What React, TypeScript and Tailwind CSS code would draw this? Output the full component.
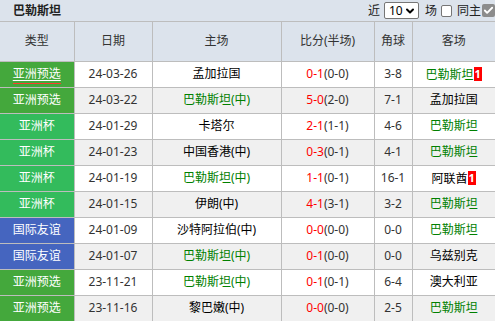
import { ChevronDown, Check } from 'lucide-react';

type Row = {
  type: string;
  date: string;
  home: string;
  homeGreen?: boolean;
  score: string;
  half: string;
  corner: string;
  away: string;
  awayGreen?: boolean;
  card?: string;
};

const rows: Row[] = [
  { type: '亚洲预选', date: '24-03-26', home: '孟加拉国', score: '0-1', half: '(0-0)', corner: '3-8', away: '巴勒斯坦', awayGreen: true, card: '1' },
  { type: '亚洲预选', date: '24-03-22', home: '巴勒斯坦(中)', homeGreen: true, score: '5-0', half: '(2-0)', corner: '7-1', away: '孟加拉国' },
  { type: '亚洲杯', date: '24-01-29', home: '卡塔尔', score: '2-1', half: '(1-1)', corner: '4-6', away: '巴勒斯坦', awayGreen: true },
  { type: '亚洲杯', date: '24-01-23', home: '中国香港(中)', score: '0-3', half: '(0-1)', corner: '4-1', away: '巴勒斯坦', awayGreen: true },
  { type: '亚洲杯', date: '24-01-19', home: '巴勒斯坦(中)', homeGreen: true, score: '1-1', half: '(0-1)', corner: '16-1', away: '阿联酋', card: '1' },
  { type: '亚洲杯', date: '24-01-15', home: '伊朗(中)', score: '4-1', half: '(3-1)', corner: '3-2', away: '巴勒斯坦', awayGreen: true },
  { type: '国际友谊', date: '24-01-09', home: '沙特阿拉伯(中)', score: '0-0', half: '(0-0)', corner: '0-0', away: '巴勒斯坦', awayGreen: true },
  { type: '国际友谊', date: '24-01-07', home: '巴勒斯坦(中)', homeGreen: true, score: '0-1', half: '(0-0)', corner: '0-0', away: '乌兹别克' },
  { type: '亚洲预选', date: '23-11-21', home: '巴勒斯坦(中)', homeGreen: true, score: '0-1', half: '(0-1)', corner: '6-4', away: '澳大利亚' },
  { type: '亚洲预选', date: '23-11-16', home: '黎巴嫩(中)', score: '0-0', half: '(0-0)', corner: '2-5', away: '巴勒斯坦', awayGreen: true },
];

function typeColor(t: string) {
  if (t === '亚洲杯') return 'bg-[#33bb5c]';
  if (t === '国际友谊') return 'bg-[#4565bf]';
  return 'bg-[#44a83c]';
}

function App() {
  return (
    <div className="w-[495px] h-[321px] overflow-hidden bg-white text-[12px] leading-none text-[#222] font-['Noto_Sans','Noto_Sans_CJK_SC',sans-serif]">
      <div className="h-[22px] bg-[#dce3ec] border-b border-[#bdbdbd] flex items-center justify-between">
        <span className="pl-[13px] font-bold text-[12px] text-[#222]">巴勒斯坦</span>
        <div className="flex items-center h-full whitespace-nowrap w-[127px] shrink-0">
          <span className="text-[12px] w-[16px]">近</span>
          <div className="w-[35px] h-[17px] bg-white border border-[#767676] rounded-[2px] flex items-center justify-between pl-[4px] pr-[2px] text-[12px] text-black">
            <span>10</span>
            <ChevronDown size={12} strokeWidth={4} className="text-black" />
          </div>
          <span className="text-[12px] ml-[6px] mr-[4px]">场</span>
          <div className="w-[11px] h-[12px] bg-white border border-[#767676] rounded-[2px] shrink-0" />
          <span className="text-[12px] ml-[5px] mr-[1px]">同主</span>
          <div className="w-[13px] h-[13px] bg-[#8c8c8c] rounded-[2px] flex items-center justify-center shrink-0">
            <Check size={11} strokeWidth={4} className="text-white" />
          </div>
        </div>
      </div>
      <table className="w-[495px] table-fixed border-collapse">
        <colgroup>
          <col className="w-[74px]" />
          <col className="w-[78px]" />
          <col className="w-[129px]" />
          <col className="w-[93px]" />
          <col className="w-[38px]" />
          <col className="w-[83px]" />
        </colgroup>
        <thead>
          <tr className="h-[39px] bg-[#dce3ec] text-[12px] text-[#333]">
            {['类型', '日期', '主场', '比分(半场)', '角球', '客场'].map((h, i) => (
              <th
                key={h}
                className={`font-normal border-b border-[#bdbdbd] ${i > 0 ? 'border-l' : ''}`}
              >
                {h}
              </th>
            ))}
          </tr>
        </thead>
        <tbody>
          {rows.map((r, i) => (
            <tr key={i} className={`h-[26px] text-[12px] ${i % 2 === 1 ? 'bg-[#f0f0f0]' : 'bg-white'}`}>
              <td className={`${typeColor(r.type)} text-white text-center border-b border-[#bdbdbd]`}>
                <span className={i === 0 ? 'underline decoration-white underline-offset-2 border-b border-[#ff3b30] pb-[1px]' : ''}>
                  {r.type}
                </span>
              </td>
              <td className="text-center text-[#333] border-l border-b border-[#bdbdbd]">{r.date}</td>
              <td className={`text-center border-l border-b border-[#bdbdbd] whitespace-nowrap overflow-hidden ${r.homeGreen ? 'text-[#008000]' : 'text-black'}`}>
                {r.home}
              </td>
              <td className="text-center text-[#333] border-l border-b border-[#bdbdbd]">
                <span className="text-[#ff0000]">{r.score}</span>
                {r.half}
              </td>
              <td className="text-center text-[#333] border-l border-b border-[#bdbdbd]">{r.corner}</td>
              <td className={`text-center border-l border-b border-[#bdbdbd] whitespace-nowrap ${r.awayGreen ? 'text-[#008000]' : 'text-black'}`}>
                {r.away}
                {r.card && (
                  <span className="inline-block bg-[#ff0000] text-white text-[11px] font-bold px-[1px] leading-[14px] align-[1px]">
                    {r.card}
                  </span>
                )}
              </td>
            </tr>
          ))}
        </tbody>
      </table>
    </div>
  );
}

export default App;
